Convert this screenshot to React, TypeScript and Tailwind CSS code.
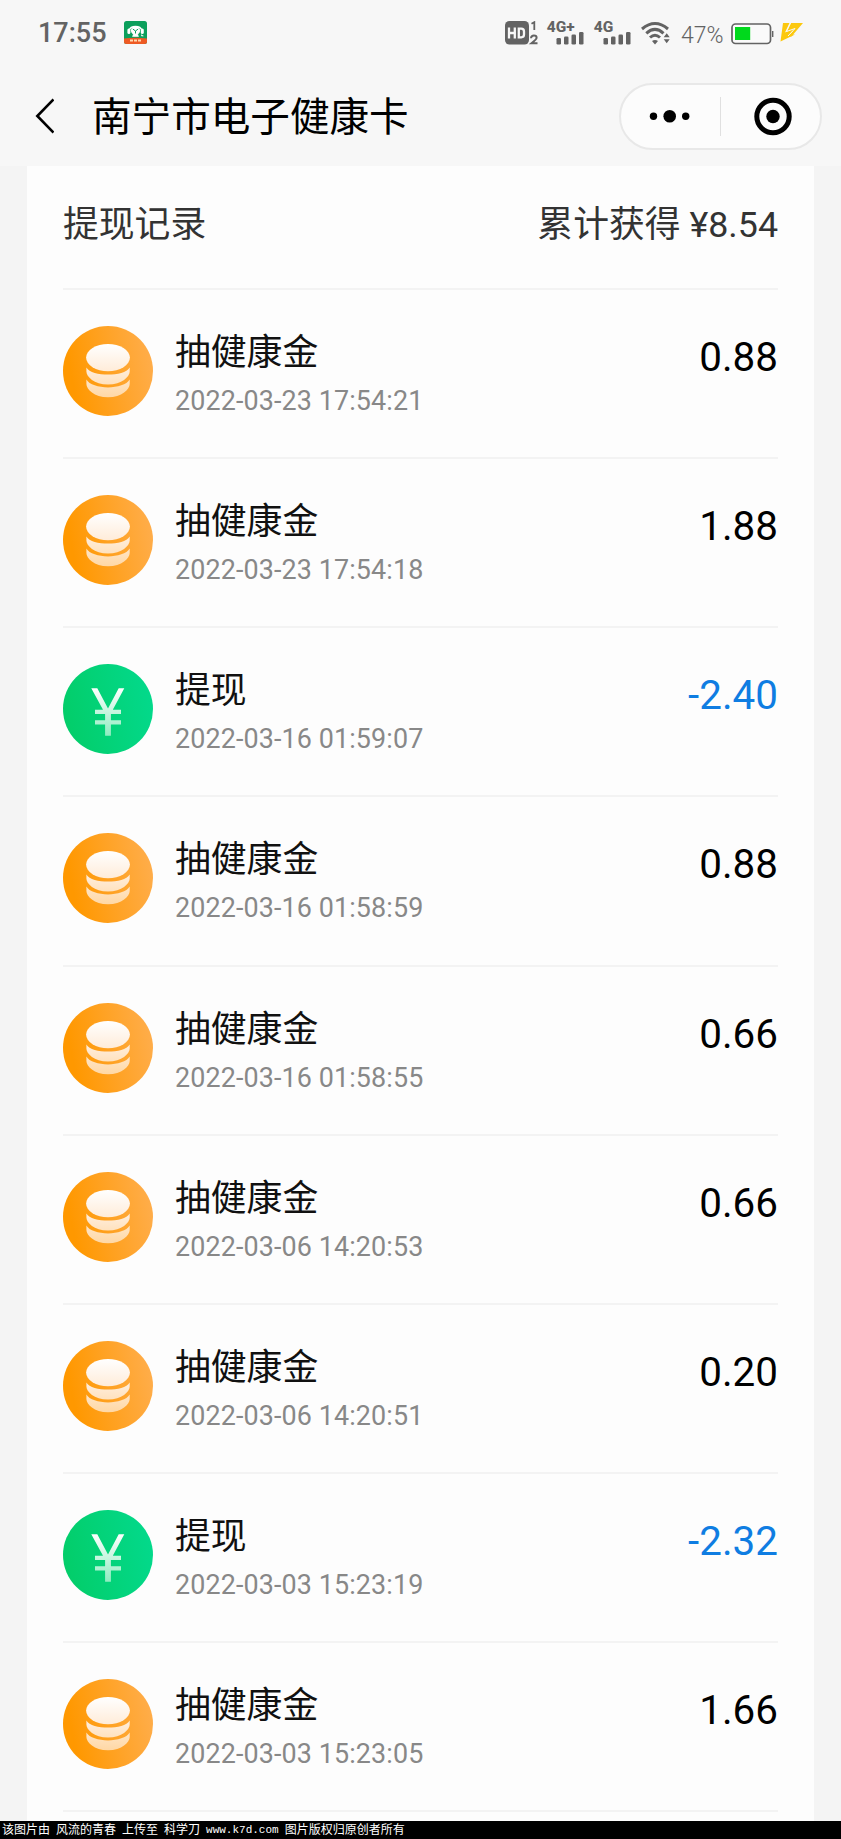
import React from 'react';

type RecordItem = {
  type: 'coin' | 'withdraw';
  time: string;
  amount: string;
};

const records: RecordItem[] = [
  { type: 'coin', time: '2022-03-23 17:54:21', amount: '0.88' },
  { type: 'coin', time: '2022-03-23 17:54:18', amount: '1.88' },
  { type: 'withdraw', time: '2022-03-16 01:59:07', amount: '-2.40' },
  { type: 'coin', time: '2022-03-16 01:58:59', amount: '0.88' },
  { type: 'coin', time: '2022-03-16 01:58:55', amount: '0.66' },
  { type: 'coin', time: '2022-03-06 14:20:53', amount: '0.66' },
  { type: 'coin', time: '2022-03-06 14:20:51', amount: '0.20' },
  { type: 'withdraw', time: '2022-03-03 15:23:19', amount: '-2.32' },
  { type: 'coin', time: '2022-03-03 15:23:05', amount: '1.66' },
];

const CoinIcon = () => (
  <svg className="w-[90px] h-[90px] shrink-0" viewBox="0 0 90 90">
    <defs>
      <linearGradient id="coinBg" x1="0" y1="0.6" x2="1" y2="0.4">
        <stop offset="0.1" stopColor="#ff9800" />
        <stop offset="1" stopColor="#ffad4a" />
      </linearGradient>
      <linearGradient id="coinFg" x1="0" y1="18" x2="0" y2="72" gradientUnits="userSpaceOnUse">
        <stop offset="0" stopColor="#fff" />
        <stop offset="0.45" stopColor="#ffeedd" />
        <stop offset="1" stopColor="#ffd7a3" />
      </linearGradient>
    </defs>
    <circle cx="45" cy="45" r="45" fill="url(#coinBg)" />
    <g fill="url(#coinFg)">
      <ellipse cx="45" cy="31.6" rx="21.9" ry="13.6" />
      <path d="M23.4 41.4C29 51 61 51 66.700 41.400V45.500C66.700 50.500 59 58.600 45 58.600S23.400 50.500 23.400 45.500z" />
      <path d="M23.400 53.600C29 64 61 64 66.700 53.600V58C66.700 63 59 71.300 45 71.300S23.400 63 23.400 58z" />
    </g>
  </svg>
);

const YuanIcon = () => (
  <svg className="w-[90px] h-[90px] shrink-0" viewBox="0 0 90 90">
    <defs>
      <linearGradient id="yuanBg" x1="0" y1="0.6" x2="1" y2="0.4">
        <stop offset="0" stopColor="#03cd69" />
        <stop offset="1" stopColor="#03d98b" />
      </linearGradient>
      <linearGradient id="yuanFg" x1="0" y1="24" x2="0" y2="72" gradientUnits="userSpaceOnUse">
        <stop offset="0" stopColor="#fff" />
        <stop offset="1" stopColor="#8eecc0" />
      </linearGradient>
    </defs>
    <circle cx="45" cy="45" r="45" fill="url(#yuanBg)" />
    <path
      d="M28.300 24.300h6L45 44.500l10.700-20.200h5.600L49.800 45.800h8.200v4.200H47.900v6.300h10.100v4.100H47.900v11.300h-5.800V60.400H32v-4.100h10.100V50H32v-4.200h8z"
      fill="url(#yuanFg)"
    />
  </svg>
);

const AppBadge = () => (
  <svg className="w-6 h-6 ml-[17px]" viewBox="0 0 24 24">
    <rect x="0" y="0" width="23" height="23" rx="2.500" fill="#0b9f5b" />
    <path d="M0 17.500q11.500-1.500 23 0v3a2.500 2.500 0 0 1-2.500 2.500h-18a2.500 2.500 0 0 1-2.500-2.500z" fill="#ee5a24" />
    <path d="M5 9.500a6.700 5.300 0 0 1 13 0" fill="none" stroke="#fff" strokeWidth="1.300" />
    <ellipse cx="11.500" cy="9.500" rx="4.600" ry="4.300" fill="#fff" />
    <rect x="3.400" y="7.500" width="3" height="5.500" rx="1.500" fill="#fff" />
    <rect x="16.800" y="7.500" width="3" height="5.500" rx="1.500" fill="#fff" />
    <path d="M9.500 13h4l1 2.500H8.500zM17.500 13.500V15h2" fill="#fff" stroke="#fff" strokeWidth="0.600" />
    <path d="M8.800 8l2.700 2 2.700-2M11.500 10v2.500" fill="none" stroke="#0b9f5b" strokeWidth="1" />
    <path d="M6 19.500h3M10 19.500h3M14 19.500h3" stroke="#ffd9b0" strokeWidth="2.200" />
  </svg>
);

const HdIcon = () => (
  <svg className="w-[36px] h-[26px]" viewBox="0 0 36 26" fill="#636363">
    <rect x="0" y="0" width="24" height="23.500" rx="4.500" />
    <path d="M4 6.500v11M9.800 6.500v11M4 12h6M13.800 7.700h2.500q2.700 0 2.700 2.700v3.200q0 2.700-2.700 2.700h-2.500z" fill="none" stroke="#f7f7f7" strokeWidth="2.300" />
    <path d="M26.500 2.800l2.800-1.600V9" fill="none" stroke="#636363" strokeWidth="1.800" />
    <path d="M26 17.200q.2-2.700 3-2.700 2.600 0 2.600 2.200 0 1.500-5.100 5.600h6" fill="none" stroke="#636363" strokeWidth="2" />
  </svg>
);

const SignalIcon = ({ label }: { label: string }) => (
  <svg className="w-[38px] h-6 overflow-visible" viewBox="0 0 38 24" fill="#636363">
    <text x="-0.300" y="11.300" fontSize="15.500" fontWeight="800" fontFamily="Roboto">{label}</text>
    <rect x="9.500" y="17" width="4.500" height="6.500" rx="1.300" />
    <rect x="17" y="15.500" width="4.500" height="8" rx="1.300" />
    <rect x="24.500" y="13.500" width="4.500" height="10" rx="1.300" />
    <rect x="32" y="11" width="4.500" height="12.500" rx="1.300" />
  </svg>
);

const WifiIcon = () => (
  <svg className="w-[30px] h-6" viewBox="0 0 30 24" fill="none" stroke="#636363" strokeWidth="3">
    <path d="M1 8Q14 -3 27 8" />
    <path d="M5.300 12.300Q14 4.500 22.500 12.300" />
    <path d="M9 16.500Q14 12 19 16.500" />
    <path d="M11 20q3-2 6 0l-3 3.500z" fill="#636363" stroke="none" />
    <path d="M25.700 12.300l3 4h-6zM25.700 22.300l3-4h-6z" fill="#636363" stroke="none" />
  </svg>
);

const BatteryIcon = () => (
  <svg className="w-[43px] h-[22px]" viewBox="0 0 43 22">
    <rect x="1" y="1" width="38.500" height="19.500" rx="3.500" fill="#fafafa" stroke="#636363" strokeWidth="1.700" />
    <rect x="4" y="4" width="15.200" height="13" fill="#00d91c" />
    <path d="M41.700 8v6" stroke="#636363" strokeWidth="1.400" />
  </svg>
);

const BoltIcon = () => (
  <svg className="w-6 h-5" viewBox="0 0 24 20" fill="#fcc80e">
    <path d="M3 1h6.500L5 10.500 15.500 5.500 9.500 12.500H15L0.500 19.500z" />
    <path d="M11 1h12L11.500 14.500H8L13 9H7z" />
    <path d="M10.500 1L6.500 9.500l8.500-3L8 14" fill="none" stroke="#f7f7f7" strokeWidth="1" />
  </svg>
);

const StatusBar = () => (
  <div className="flex items-start h-[70px] pt-[21px] text-[#636363]">
    <div className="ml-[38px] text-[27px] leading-6 font-medium w-[69px]">17:55</div>
    <AppBadge />
    <div className="ml-[357px] flex items-start">
      <HdIcon />
      <div className="ml-[6px]"><SignalIcon label="4G+" /></div>
      <div className="ml-[9px]"><SignalIcon label="4G" /></div>
      <div className="ml-[9px]"><WifiIcon /></div>
      <div className="ml-[10px] mt-[3px] w-[43px] text-[23px] leading-6 font-light whitespace-nowrap">47%</div>
      <div className="ml-[7px] mt-[2px]"><BatteryIcon /></div>
      <div className="ml-[6px] mt-[1px]"><BoltIcon /></div>
    </div>
  </div>
);

const NavBar = () => (
  <div className="flex items-center h-[96px] pl-[34px] pr-[19px] pb-[4px]">
    <svg className="w-5 h-9" viewBox="0 0 20 36" fill="none" stroke="#000" strokeWidth="2.600">
      <path d="M19.500 1.500L3.300 18 19.500 34.500" />
    </svg>
    <h1 className="ml-[38px] pt-[4px] text-[39.600px] leading-[56px] text-black">南宁市电子健康卡</h1>
    <div className="ml-auto flex items-center w-[203px] h-[67px] rounded-full border-2 border-[#e8e8e8] bg-[#fcfcfc]">
      <svg className="w-full h-full" viewBox="0 0 199 63">
        <circle cx="32.500" cy="31.300" r="3.700" />
        <circle cx="48.700" cy="31.300" r="6.300" />
        <circle cx="64.700" cy="31.300" r="3.700" />
        <path d="M99.500 12v39" stroke="#e0e0e0" strokeWidth="1" />
        <circle cx="152" cy="31.500" r="16.200" fill="none" stroke="#000" strokeWidth="5" />
        <circle cx="152" cy="31.500" r="6.700" />
      </svg>
    </div>
  </div>
);

const RecordRow = ({ item }: { item: RecordItem }) => {
  const isWithdraw = item.type === 'withdraw';

  return (
    <div className="flex h-[169.150px] shrink-0 border-b-2 border-[#f3f3f3] pt-[36px]">
      {isWithdraw ? <YuanIcon /> : <CoinIcon />}
      <div className="ml-[22px] pt-[2px]">
        <div className="text-[35.800px] leading-[50px] text-[#111]">{isWithdraw ? '提现' : '抽健康金'}</div>
        <div className="mt-[5px] text-[26.900px] leading-9 tracking-[0.120px] text-[#888]">{item.time}</div>
      </div>
      <div className={`ml-auto pt-[2px] text-[40.400px] leading-[60px] ${isWithdraw ? 'text-[#0f7de2]' : 'text-black'}`}>
        {item.amount}
      </div>
    </div>
  );
};

function App() {
  return (
    <div className="flex flex-col w-[841px] h-[1839px] overflow-hidden bg-[#f4f4f4] font-[Roboto,'Noto_Sans_CJK_SC',sans-serif]">
      <header className="bg-[#f7f7f7] shrink-0">
        <StatusBar />
        <NavBar />
      </header>

      <main className="flex-1 min-h-0 overflow-hidden flex flex-col mx-[27px] px-9 bg-[#fdfdfd]">
        <div className="flex justify-between h-[124px] shrink-0 pt-[34px] border-b-2 border-[#f3f3f3] text-[35.800px] leading-[50px] text-[#333]">
          <span>提现记录</span>
          <span>累计获得 ¥8.54</span>
        </div>
        {records.map((item) => (
          <RecordRow key={item.time} item={item} />
        ))}
      </main>

      {/* Watermark */}
      <footer className="flex items-center h-[18px] shrink-0 pl-[2px] gap-[6px] bg-black text-white text-[12px] leading-[18px] whitespace-nowrap">
        <span>该图片由</span>
        <span>风流的青春</span>
        <span>上传至</span>
        <span>科学刀</span>
        <span className="font-['Liberation_Mono',monospace] text-[11px]">www.k7d.com</span>
        <span>图片版权归原创者所有</span>
      </footer>
    </div>
  );
}

export default App;
